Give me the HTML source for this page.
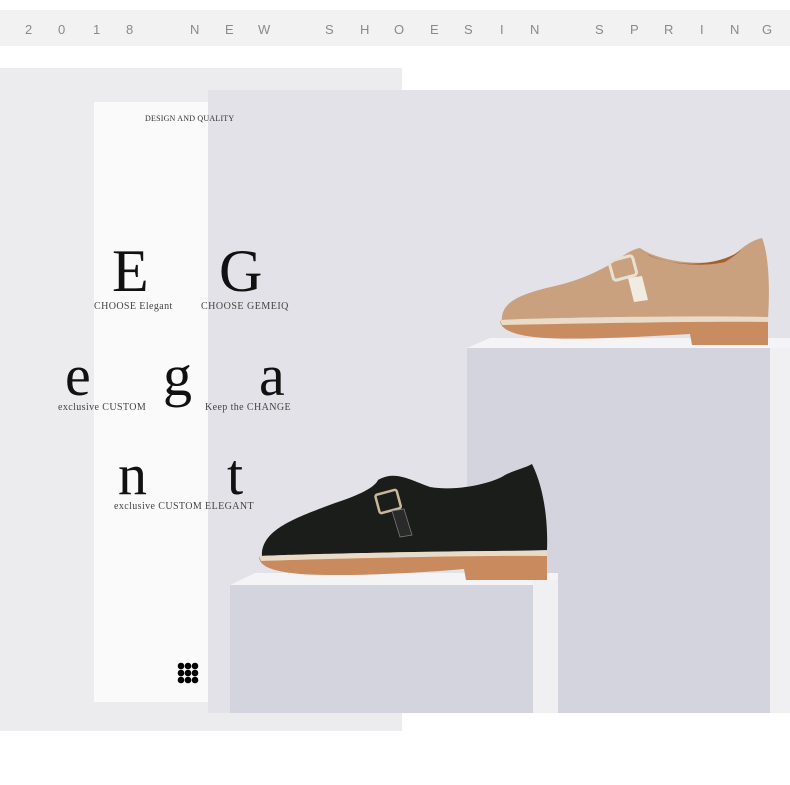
<!DOCTYPE html>
<html><head><meta charset="utf-8"><style>
html,body{margin:0;padding:0;background:#fff;}
body{width:790px;height:785px;overflow:hidden;position:relative;}
svg{position:absolute;left:0;top:0;}
</style></head><body>
<svg width="790" height="785" viewBox="0 0 790 785" xmlns="http://www.w3.org/2000/svg">
<rect x="0" y="0" width="790" height="785" fill="#fff"/>
<rect x="0" y="10" width="790" height="36" fill="#f2f2f2"/>
<g font-family="Liberation Sans, sans-serif" font-size="13" fill="#8a8a8a">
<text x="25" y="34">2</text><text x="58" y="34">0</text><text x="93" y="34">1</text><text x="126" y="34">8</text>
<text x="190" y="34">N</text><text x="225" y="34">E</text><text x="258" y="34">W</text>
<text x="325" y="34">S</text><text x="360" y="34">H</text><text x="394" y="34">O</text><text x="430" y="34">E</text><text x="464" y="34">S</text><text x="500" y="34">I</text><text x="530" y="34">N</text>
<text x="595" y="34">S</text><text x="630" y="34">P</text><text x="664" y="34">R</text><text x="700" y="34">I</text><text x="730" y="34">N</text><text x="762" y="34">G</text>
</g>
<rect x="0" y="68" width="402" height="663" fill="#ececee"/>
<rect x="94" y="102" width="120" height="600" fill="#fafafa"/>
<rect x="208" y="90" width="582" height="623" fill="#e2e2e8"/>
<!-- right pedestal -->
<polygon points="467,348 490,338 790,338 790,348" fill="#f4f4f6"/>
<rect x="467" y="348" width="303" height="365" fill="#d4d4de"/>
<rect x="770" y="348" width="20" height="365" fill="#f0f0f2"/>
<!-- left pedestal -->
<polygon points="230,585 255,573 558,573 558,585" fill="#f4f4f6"/>
<rect x="230" y="585" width="303" height="128" fill="#d4d4de"/>
<rect x="533" y="580" width="25" height="133" fill="#f0f0f2"/>
<!-- tan shoe -->
<g>
<path d="M502,322 C500,302 520,294 555,286 C585,279 605,268 620,258 C628,252 634,249 640,248 C660,262 700,266 725,260 C738,254 745,242 762,238 C769,255 770,290 768,318 Z" fill="#c9a17f"/>
<path d="M640,250 C660,264 700,268 725,262 C732,258 738,253 744,248 C722,266 680,268 650,256 Z" fill="#a85e2a"/>
<path d="M500,320 C530,318 700,315 768,317 L768,345 L692,345 L690,334 C640,337 580,340 545,338 C515,336 500,330 500,320 Z" fill="#c98c60"/>
<path d="M500,320 C530,318 700,315 768,317 L768,322 C700,321 560,324 502,325 Z" fill="#e8dcc8"/>
<rect x="611" y="258" width="24" height="20" rx="3" fill="none" stroke="#e7e1d4" stroke-width="3" transform="rotate(-15 623 268)"/>
<polygon points="628,278 642,276 648,300 634,302" fill="#f0ece2"/>
</g>
<!-- black shoe -->
<g>
<path d="M262,557 C260,530 295,518 335,503 C360,495 375,487 378,480 C395,470 410,480 430,487 C460,492 495,482 505,475 C515,470 525,468 532,464 C545,490 548,525 547,550 Z" fill="#1b1d1a"/>
<path d="M259,556 C300,554 480,550 547,551 L547,580 L466,580 L464,569 C420,573 340,577 300,574 C270,571 259,566 259,556 Z" fill="#c98a5e"/>
<path d="M259,556 C300,554 480,550 547,551 L547,556 C480,555 320,559 261,561 Z" fill="#e8dcc8"/>
<rect x="377" y="492" width="22" height="19" rx="2" fill="none" stroke="#c9b79a" stroke-width="2.5" transform="rotate(-15 388 501)"/>
<polygon points="392,511 404,509 412,535 400,537" fill="#2a2a2a" stroke="#777" stroke-width="0.8"/>
</g>
<!-- text -->
<g font-family="Liberation Serif, serif" fill="#111">
<text x="145" y="121" font-size="8" fill="#333" letter-spacing="0.2">DESIGN AND QUALITY</text>
<text x="112" y="291" font-size="60">E</text>
<text x="219" y="291" font-size="60">G</text>
<text x="94" y="309" font-size="10" fill="#444" letter-spacing="0.4">CHOOSE Elegant</text>
<text x="201" y="309" font-size="10" fill="#444" letter-spacing="0.5">CHOOSE GEMEIQ</text>
<text x="65" y="395" font-size="58">e</text>
<text x="163" y="395" font-size="58">g</text>
<text x="259" y="395" font-size="58">a</text>
<text x="58" y="410" font-size="10" fill="#444" letter-spacing="0.4">exclusive CUSTOM</text>
<text x="205" y="410" font-size="10" fill="#444" letter-spacing="0.4">Keep the CHANGE</text>
<text x="118" y="494" font-size="58">n</text>
<text x="227" y="494" font-size="58">t</text>
<text x="114" y="509" font-size="10" fill="#444" letter-spacing="0.4">exclusive CUSTOM ELEGANT</text>
</g>
<g fill="#000">
<circle cx="181" cy="666" r="3.3"/><circle cx="188" cy="666" r="3.3"/><circle cx="195" cy="666" r="3.3"/>
<circle cx="181" cy="673" r="3.3"/><circle cx="188" cy="673" r="3.3"/><circle cx="195" cy="673" r="3.3"/>
<circle cx="181" cy="680" r="3.3"/><circle cx="188" cy="680" r="3.3"/><circle cx="195" cy="680" r="3.3"/>
</g>
</svg>
</body></html>
